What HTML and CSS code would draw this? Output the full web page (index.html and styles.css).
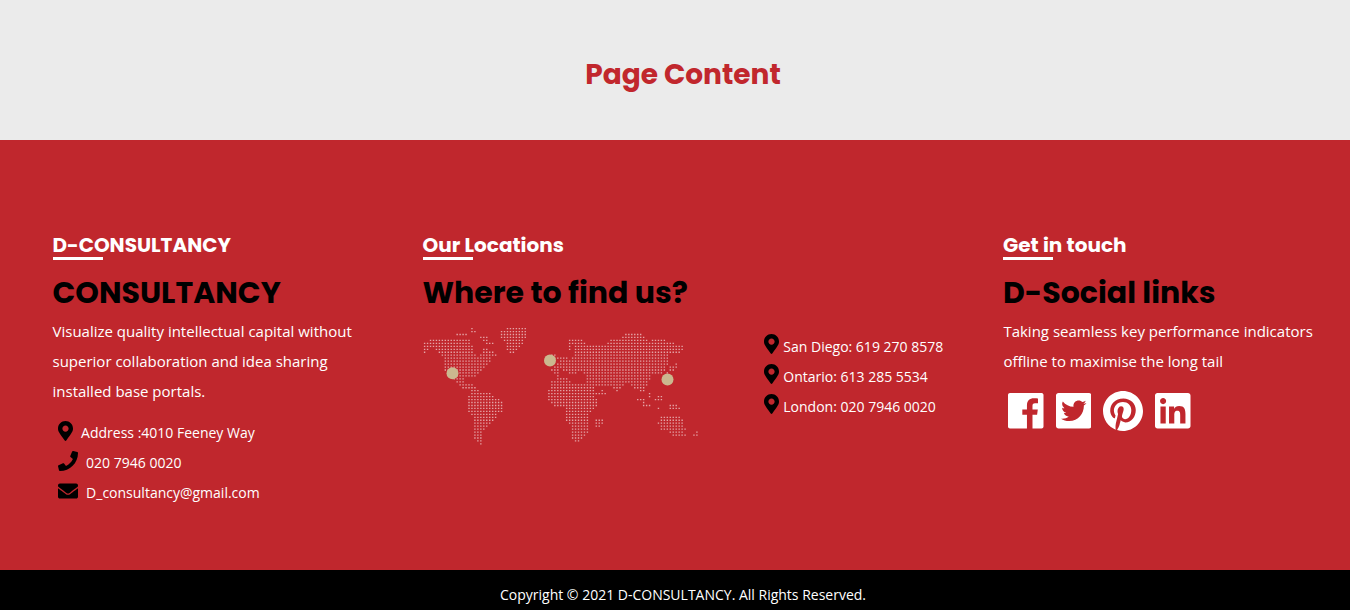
FILE: index.html
```html
<!DOCTYPE html>
<html lang="en">
<head>
<meta charset="utf-8">
<title>D-CONSULTANCY</title>
<link rel="stylesheet" href="styles.css">
</head>
<body>
<svg class="sprite" aria-hidden="true">
  <symbol id="pin" viewBox="0 0 384 512"><path d="M172.268 501.67C26.97 291.031 0 269.413 0 192 0 85.961 85.961 0 192 0s192 85.961 192 192c0 77.413-26.97 99.031-172.268 309.67-9.535 13.774-29.93 13.773-39.464 0zM192 272c44.183 0 80-35.817 80-80s-35.817-80-80-80-80 35.817-80 80 35.817 80 80 80z"/></symbol>
</svg>
<main class="page"><h1 class="page-title">Page Content</h1></main>
<footer class="footer">
  <section class="about">
    <h3 class="label">D-CONSULTANCY</h3>
    <h2 class="heading">CONSULTANCY</h2>
    <p class="text">Visualize quality intellectual capital without superior collaboration and idea sharing installed base portals.</p>
    <ul class="contacts">
      <li><svg class="pin"><use href="#pin"/></svg><span>Address :4010 Feeney Way</span></li>
      <li><svg class="wide" viewBox="0 0 512 512"><path d="M493.4 24.6l-104-24c-11.3-2.6-22.9 3.3-27.5 13.9l-48 112c-4.2 9.8-1.4 21.3 6.9 28l60.6 49.6c-36 76.7-98.9 140.5-177.2 177.2l-49.6-60.6c-6.8-8.3-18.2-11.1-28-6.9l-112 48C3.9 366.5-2 378.1.6 389.4l24 104C27.1 504.2 36.7 512 48 512c256.1 0 464-207.5 464-464 0-11.2-7.7-20.9-18.6-23.4z"/></svg><span>020 7946 0020</span></li>
      <li><svg class="wide" viewBox="0 0 512 512"><path d="M502.3 190.8c3.9-3.1 9.7-.2 9.7 4.7V400c0 26.5-21.5 48-48 48H48c-26.5 0-48-21.5-48-48V195.6c0-5 5.7-7.8 9.7-4.7 22.4 17.4 52.1 39.5 154.1 113.6 21.1 15.4 56.7 47.8 92.2 47.6 35.7.3 72-32.8 92.3-47.6 102-74.1 131.6-96.3 154-113.7zM256 320c23.2.4 56.6-29.2 73.4-41.4 132.7-96.3 142.8-104.7 173.4-128.7 5.8-4.5 9.2-11.5 9.2-18.9v-19c0-26.5-21.5-48-48-48H48c-26.5 0-48 21.5-48 48v19c0 7.4 3.4 14.3 9.2 18.9 30.6 23.9 40.7 32.4 173.4 128.7 16.8 12.2 50.2 41.8 73.4 41.4z"/></svg><span>D_consultancy@gmail.com</span></li>
    </ul>
  </section>
  <section class="locations">
    <h3 class="label">Our Locations</h3>
    <h2 class="heading">Where to find us?</h2>
    <div class="places">
      <svg class="map" viewBox="0 0 276 120" role="img" aria-label="World map">
        <path id="dots" class="dots"/>
        <circle class="spot" cx="29.5" cy="48.3" r="6"/>
        <circle class="spot" cx="127" cy="35.6" r="6"/>
        <circle class="spot" cx="244.5" cy="54.4" r="6"/>
      </svg>
      <ul class="offices">
        <li><svg class="pin"><use href="#pin"/></svg><span>San Diego: 619 270 8578</span></li>
        <li><svg class="pin"><use href="#pin"/></svg><span>Ontario: 613 285 5534</span></li>
        <li><svg class="pin"><use href="#pin"/></svg><span>London: 020 7946 0020</span></li>
      </ul>
    </div>
  </section>
  <section class="touch">
    <h3 class="label">Get in touch</h3>
    <h2 class="heading">D-Social links</h2>
    <p class="text">Taking seamless key performance indicators offline to maximise the long tail</p>
    <div class="social">
      <svg class="square" viewBox="0 32 448 448"><path d="M448 56.7v398.5c0 13.7-11.1 24.7-24.7 24.7H309.1V306.5h58.2l8.7-67.6h-67v-43.2c0-19.6 5.4-32.9 33.5-32.9h35.8v-60.5c-6.2-.8-27.4-2.7-52.2-2.7-51.6 0-87 31.5-87 89.4v49.9h-58.4v67.6h58.4V480H24.7C11.1 480 0 468.9 0 455.3V56.7C0 43.1 11.1 32 24.7 32h398.5c13.7 0 24.8 11.1 24.8 24.7z"/></svg>
      <svg class="square" viewBox="0 32 448 448"><path d="M416 32H32C14.3 32 0 46.300 0 64v384c0 17.700 14.300 32 32 32h384c17.700 0 32-14.300 32-32V64c0-17.700-14.300-32-32-32zm-64.900 158.800c.2 2.800.2 5.700.2 8.500 0 86.700-66 186.600-186.600 186.600-37.200 0-71.700-10.800-100.700-29.400 5.300.6 10.400.8 15.800.8 30.700 0 58.900-10.400 81.400-28-28.800-.6-53-19.500-61.300-45.500 10.100 1.500 19.200 1.500 29.600-1.200-30-6.100-52.500-32.500-52.500-64.400v-.8c8.700 4.900 18.900 7.900 29.600 8.300a65.447 65.447 0 0 1-29.200-54.600c0-12.200 3.200-23.400 8.900-33.100 32.300 39.800 80.800 65.800 135.200 68.600-9.300-44.500 24-80.600 64-80.600 18.900 0 35.900 7.900 47.900 20.700 14.800-2.800 29-8.300 41.600-15.800-4.900 15.200-15.200 28-28.800 36.100 13.200-1.400 26-5.100 37.800-10.200-8.900 13.100-20.100 24.700-32.900 34z"/></svg>
      <svg class="round" viewBox="0 8 496 496"><path d="M496 256c0 137-111 248-248 248-25.600 0-50.200-3.900-73.400-11.100 10.100-16.500 25.200-43.500 30.800-65 3-11.600 15.400-59 15.400-59 8.100 15.400 31.700 28.500 56.800 28.500 74.800 0 128.700-68.800 128.700-154.300 0-81.900-66.900-143.200-152.900-143.200-107 0-163.900 71.800-163.900 150.100 0 36.400 19.400 81.700 50.300 96.100 4.700 2.200 7.200 1.200 8.300-3.300.8-3.400 5-20.300 6.900-28.100.6-2.500.3-4.700-1.700-7.100-10.100-12.500-18.300-35.300-18.300-56.600 0-54.700 41.400-107.600 112-107.600 60.900 0 103.600 41.500 103.600 100.900 0 67.100-33.900 113.600-78 113.600-24.300 0-42.600-20.100-36.700-44.800 7-29.500 20.500-61.300 20.500-82.600 0-19-10.200-34.900-31.400-34.900-24.900 0-44.900 25.700-44.900 60.200 0 22 7.400 36.800 7.400 36.800s-24.500 103.800-29 123.200c-5 21.400-3 51.600-.9 71.200C65.400 450.900 0 361.100 0 256 0 119 111 8 248 8s248 111 248 248z"/></svg>
      <svg class="square" viewBox="0 32 448 448"><path d="M416 32H31.900C14.300 32 0 46.500 0 64.300v383.400C0 465.500 14.300 480 31.900 480H416c17.600 0 32-14.500 32-32.300V64.300c0-17.800-14.400-32.300-32-32.300zM135.400 416H69V202.200h66.500V416zm-33.200-243c-21.300 0-38.500-17.300-38.500-38.500S80.900 96 102.200 96c21.200 0 38.500 17.300 38.500 38.500 0 21.300-17.200 38.500-38.500 38.500zm282.100 243h-66.400V312c0-24.800-.5-56.700-34.500-56.700-34.600 0-39.900 27-39.900 54.900V416h-66.400V202.200h63.700v29.200h.9c8.900-16.800 30.600-34.500 62.900-34.500 67.200 0 79.700 44.300 79.700 101.900V416z"/></svg>
    </div>
  </section>
</footer>
<div class="copyright">Copyright © 2021 D-CONSULTANCY. All Rights Reserved.</div>
<script src="map.js"></script>
</body>
</html>
```

FILE: styles.css
```css
* { box-sizing: border-box; }
body { margin: 0; height: 610px; overflow: hidden; background: #ebebeb; font-family: "Open Sans", "Noto Sans", sans-serif; color: #fff; }
h1, h2, h3, p, ul { margin: 0; padding: 0; }
ul { list-style: none; }
svg { display: block; fill: currentColor; }
.sprite { display: none; }
.page { height: 140px; padding: 52px 0 0 16px; text-align: center; }
.page-title { font: 700 28px/45px Poppins, Inter, sans-serif; color: #c1272d; white-space: nowrap; }
.footer { height: 430px; padding: 90px 0 0 52.5px; display: grid; grid-template-columns: 370px 580.5px 1fr; background: #c0272d; }
.label { font: 700 20px/30px Poppins, Inter, sans-serif; height: 40px; white-space: nowrap; }
.label::after { content: ""; display: block; width: 50px; height: 3px; margin-top: -3px; background: #fff; }
.heading { font: 700 30px/45px Poppins, Inter, sans-serif; color: #000; white-space: nowrap; }
.text { width: 315px; padding-top: 1px; font-size: 15px; line-height: 30px; }
.about .text { width: 305px; }
.touch .text { padding-left: .4px; }
.contacts { padding: 12px 0 0 5px; }
.contacts li, .offices li { display: flex; height: 30px; font-size: 14px; line-height: 30px; white-space: nowrap; }
.pin { width: 15px; height: 20px; color: #000; margin-top: 2.5px; }
.offices .pin { margin-top: 2px; }
.wide { width: 20px; height: 20px; color: #000; margin-top: 2.5px; }
.contacts span { margin-left: 8.600px; }
.places { display: flex; gap: 65px; }
.map { width: 276px; height: 120px; margin-top: 10px; }
.dots { fill: none; stroke: #fff; stroke-opacity: .58; stroke-width: 1.3; stroke-dasharray: 1.4 1.56; }
.spot { fill: #cbb88f; }
.offices { padding-top: 17px; }
.offices span { margin-left: 4.800px; }
.social { display: flex; align-items: center; gap: 12px; height: 40px; margin: 15px 0 0 5px; }
.square { width: 35.500px; height: 35.500px; }
.round { width: 40px; height: 40px; }
.copyright { height: 40px; padding: 10px 0 0 16px; background: #000; font-size: 14px; line-height: 30px; text-align: center; }
```

FILE: map.js
```js
// Each row lists the column ranges that hold land dots.
const rows = [
  "16 28-34", "16-17 26-34", "11-14 26-34 68-73", "19-21 26-34 67-74",
  "2-15 20-21 27-33 49-53 63-75 77-81", "0-15 21-23 28-33 49-54 62-84",
  "0-16 28-32 49 51-87", "0-1 4-16 20-21 28-31 49 51-87",
  "0 5-16 20-23 29-30 51-86", "6-17 19-24 43-44 51-82",
  "7-22 43-48 50-82", "7-22 46-82", "7-21 45-82 85", "7-20 44-81 83-85",
  "7-19 43-45 47-81 83-84", "8-18 44-45 49-51 54-80 82", "9-17 45 55-76",
  "10-13 45-48 55-76", "11-13 43-49 55-75", "12-16 43-67 70-75",
  "13-17 43-57 64-66 71-74", "16-18 42-57 60 65 73-74", "16-22 42-61 76",
  "15-23 42-57 76 79-80", "15-25 42-58 72-74 78-80", "15-26 43-58 74",
  "15-26 44-58 74-76 83-85", "15-26 48-57 79 83-86", "15-26 48-56",
  "16-24 48-55", "17-24 48-55 80-86", "17-23 48-55 58-60 80-87",
  "17-22 49-55 58-60 79-87", "17-21 50-55 58-59 80-87", "17-20 50-55 80-88",
  "17-19 50-55 83-87 92", "17-19 50-54 84-88 91-92", "17-19 50-53",
  "18-19 51-52", "19"
];
const step = 2.96;
document.getElementById("dots").setAttribute("d", rows.map((row, r) =>
  row.split(" ").map(range => {
    const [a, b = a] = range.split("-").map(Number);
    return `M${(0.9 + a * step).toFixed(2)} ${(3.6 + r * 2.957).toFixed(2)}h${((b - a) * step + 1.4).toFixed(2)}`;
  }).join("")
).join(""));
```
